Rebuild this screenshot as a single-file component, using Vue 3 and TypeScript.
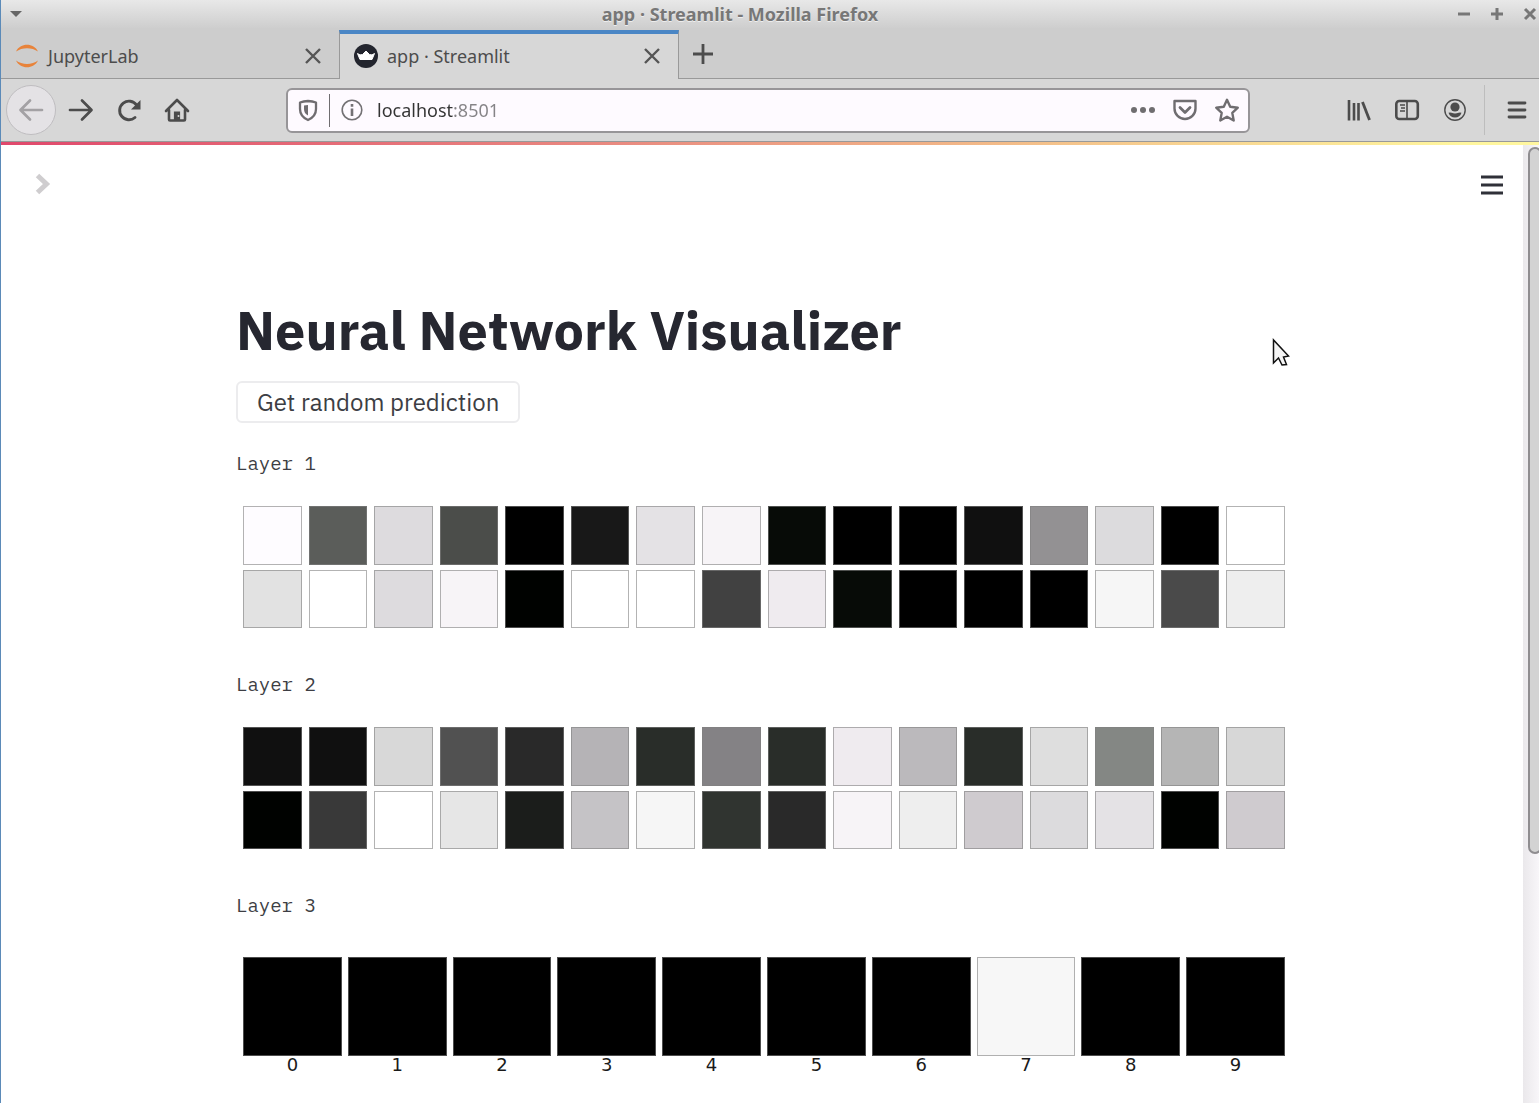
<script setup lang="ts">
import { ref } from 'vue'

interface Layer {
  name: string
  cells: string[]
}

const address = ref('localhost:8501')

const hiddenLayers: Layer[] = [
  {
    name: 'Layer 1',
    cells: [
      '#fefcff', '#5b5d5a', '#dddbde', '#4b4d4a', '#000000', '#181818', '#e4e2e5', '#f7f4f7',
      '#070b07', '#000000', '#000000', '#101010', '#939193', '#dcdbdd', '#000000', '#ffffff',
      '#e2e2e2', '#ffffff', '#dddbde', '#f7f4f7', '#000200', '#ffffff', '#ffffff', '#414141',
      '#efebef', '#070b07', '#000000', '#000000', '#000000', '#f6f6f6', '#4a4a4a', '#eeeeee',
    ],
  },
  {
    name: 'Layer 2',
    cells: [
      '#101010', '#101010', '#d8d8d8', '#515151', '#292929', '#b5b3b6', '#292d29', '#848285',
      '#292d29', '#efebef', '#bbb9bc', '#292d29', '#dedede', '#848784', '#b5b5b5', '#d7d7d7',
      '#000200', '#393939', '#ffffff', '#e6e6e6', '#1b1d1b', '#c5c3c6', '#f6f6f6', '#303430',
      '#292929', '#f7f4f7', '#eeeeee', '#cfcbcf', '#dcdbdd', '#e4e2e5', '#000200', '#cfcbcf',
    ],
  },
]

const digits: string[] = Array.from({ length: 10 }, (_, i) => (i === 7 ? '#f7f7f7' : '#000000'))
</script>

<template>
  <div class="window">
    <header class="titlebar">
      <button class="win-btn" aria-label="Window menu">
        <svg width="12" height="8" viewBox="0 0 12 8"><path d="M0 1h12L6 7z" fill="#666" /></svg>
      </button>
      <span class="win-title">app · Streamlit - Mozilla Firefox</span>
      <div class="win-actions">
        <button class="win-btn" aria-label="Minimize">
          <svg width="14" height="14" viewBox="0 0 14 14"><path d="M1 7h12" stroke="#777" stroke-width="3" /></svg>
        </button>
        <button class="win-btn" aria-label="Maximize">
          <svg width="14" height="14" viewBox="0 0 14 14"><path d="M1 7h12M7 1v12" stroke="#777" stroke-width="3" /></svg>
        </button>
        <button class="win-btn" aria-label="Close window">
          <svg width="14" height="14" viewBox="0 0 14 14"><path d="M2 2l10 10M12 2L2 12" stroke="#777" stroke-width="3" /></svg>
        </button>
      </div>
    </header>

    <nav class="tabs">
      <div class="tab">
        <svg width="24" height="26" viewBox="0 0 24 26" fill="#e8833a">
          <path d="M1 8.500C5 -.5 19 -.5 23 8.500C17 4 7 4 1 8.500z" />
          <path d="M1 17.500C5 26.500 19 26.500 23 17.500C17 22 7 22 1 17.500z" />
        </svg>
        <span class="tab-name">JupyterLab</span>
        <button class="tab-close" aria-label="Close tab">
          <svg width="16" height="16" viewBox="0 0 16 16"><path d="M1 1l14 14M15 1L1 15" stroke="#555" stroke-width="2.400" /></svg>
        </button>
      </div>
      <div class="tab active">
        <svg width="24" height="24" viewBox="0 0 24 24">
          <circle cx="12" cy="12" r="12" fill="#23252e" />
          <path d="M3.500 9.500Q6 11.800 8.500 10.500L12 7l3.500 3.500q2.500 1.300 5-1L18 15.500H6z" fill="#fff" stroke="#fff" stroke-linejoin="round" />
        </svg>
        <span class="tab-name">app · Streamlit</span>
        <button class="tab-close" aria-label="Close tab">
          <svg width="16" height="16" viewBox="0 0 16 16"><path d="M1 1l14 14M15 1L1 15" stroke="#555" stroke-width="2.400" /></svg>
        </button>
      </div>
      <div class="tab-rest">
        <button class="new-tab" aria-label="New tab">
          <svg width="22" height="22" viewBox="0 0 22 22"><path d="M1 11h20M11 1v20" stroke="#4c4c4c" stroke-width="2.800" /></svg>
        </button>
      </div>
    </nav>

    <div class="toolbar">
      <button class="back" aria-label="Back">
        <svg width="26" height="26" viewBox="0 0 26 26" fill="none" stroke="#a3a1a4" stroke-width="2.700" stroke-linecap="round" stroke-linejoin="round"><path d="M24 13H3M12 3.500L2.500 13l9.500 9.500" /></svg>
      </button>
      <button class="tool" aria-label="Forward">
        <svg width="26" height="26" viewBox="0 0 26 26" fill="none" stroke="#4c4c4c" stroke-width="2.700" stroke-linecap="round" stroke-linejoin="round"><path d="M2 13h21M14 3.500l9.500 9.500-9.500 9.500" /></svg>
      </button>
      <button class="tool" aria-label="Reload">
        <svg width="26" height="26" viewBox="0 0 26 26" fill="none" stroke="#4c4c4c">
          <path d="M19 20.500A9.300 9.300 0 1 1 20.500 8" stroke-width="2.900" stroke-linecap="round" />
          <path d="M24.500 3v9.500h-9.500z" fill="#4c4c4c" stroke="none" />
        </svg>
      </button>
      <button class="tool" aria-label="Home">
        <svg width="26" height="26" viewBox="0 0 26 26" fill="none" stroke="#4c4c4c">
          <path d="M2 14L13 3l11 11M5 13v9.500q0 1 1 1h14q1 0 1-1V13" stroke-width="2.600" stroke-linecap="round" stroke-linejoin="round" />
          <path d="M10.500 23.500V15h5v8.500z" fill="#4c4c4c" stroke-width="1.200" />
          <circle cx="14.500" cy="19" r="1" fill="#d7d7d7" stroke="none" />
        </svg>
      </button>

      <div class="url">
        <svg width="22" height="24" viewBox="0 0 22 24" fill="none" stroke="#6f6d70">
          <path d="M11 3Q15.500 3.200 19 4.500V11q0 7.500-8 11Q3 18.500 3 11V4.500Q6.500 3.200 11 3z" stroke-width="2.300" stroke-linejoin="round" />
          <path d="M11 7v10.500Q7 15.500 7 11V7.500q2-.5 4-.5z" fill="#6f6d70" stroke="none" />
        </svg>
        <span class="url-sep"></span>
        <svg width="22" height="22" viewBox="0 0 22 22" fill="none" stroke="#737174">
          <circle cx="11" cy="11" r="9.800" stroke-width="1.600" />
          <path d="M11 9.500V17M11 5v2.700" stroke-width="2.600" />
        </svg>
        <input v-model="address" class="address" type="text" aria-label="Address" spellcheck="false" />
        <button class="url-btn" aria-label="Page actions">
          <svg width="26" height="8" viewBox="0 0 26 8" fill="#6f6d70"><circle cx="4" cy="4" r="3" /><circle cx="13" cy="4" r="3" /><circle cx="22" cy="4" r="3" /></svg>
        </button>
        <button class="url-btn" aria-label="Save to Pocket">
          <svg width="26" height="24" viewBox="0 0 26 24" fill="none" stroke="#6f6d70" stroke-linecap="round" stroke-linejoin="round">
            <path d="M2.500 3h21v7.500a10.500 10.500 0 0 1-21 0z" stroke-width="2.400" />
            <path d="M8 9.500l5 5 5-5" stroke-width="2.800" />
          </svg>
        </button>
        <button class="url-btn" aria-label="Bookmark this page">
          <svg width="26" height="26" viewBox="0 0 26 26" fill="none" stroke="#6f6d70" stroke-width="2.400" stroke-linejoin="round"><path d="M13 2.800l3.200 6.900 7.600 1-5.500 5.200 1.400 7.600L13 19.800l-6.700 3.700 1.400-7.600-5.500-5.200 7.600-1z" /></svg>
        </button>
      </div>

      <button class="tool" aria-label="Library">
        <svg width="26" height="24" viewBox="0 0 26 24" fill="none" stroke="#4c4c4c"><path d="M3 2v20.500M8 5v17.500M12.500 5v17.500" stroke-width="2.600" /><path d="M16.500 4l7 18" stroke-width="2.800" /></svg>
      </button>
      <button class="tool" aria-label="Sidebars">
        <svg width="26" height="24" viewBox="0 0 26 24" fill="none" stroke="#4c4c4c">
          <rect x="2.300" y="3" width="21.500" height="18" rx="3" stroke-width="2.600" />
          <path d="M13 3v18" stroke-width="1.600" />
          <path d="M6 7h5M7 10h4M6 13h5" stroke-width="1.400" />
        </svg>
      </button>
      <button class="tool" aria-label="Account">
        <svg width="24" height="24" viewBox="0 0 24 24" fill="#4c4c4c">
          <circle cx="12" cy="12" r="10.200" fill="none" stroke="#4c4c4c" stroke-width="1.400" />
          <circle cx="12" cy="9" r="4.600" />
          <path d="M5.500 14.800q1.500-.8 3 0 3.500 1.500 7 0 1.500-.8 3 0-1.500 4.700-6.500 4.700t-6.500-4.700z" />
        </svg>
      </button>
      <span class="tool-sep"></span>
      <button class="tool app-menu" aria-label="Open menu">
        <svg width="20" height="20" viewBox="0 0 20 20" stroke="#4c4c4c" stroke-width="2.800" stroke-linecap="round"><path d="M2 3h16M2 10h16M2 17h16" /></svg>
      </button>
    </div>

    <div class="viewport">
      <div class="page">
        <div class="decoration"></div>
        <div class="page-bar">
          <button class="icon-btn" aria-label="Open sidebar">
            <svg width="16" height="24" viewBox="0 0 16 24" fill="none" stroke="#cfcdcf" stroke-width="5"><path d="M2.500 2.500L11.500 11l-9 8.500" /></svg>
          </button>
          <button class="icon-btn" aria-label="Main menu">
            <svg width="24" height="24" viewBox="0 0 24 24" stroke="#2f3038" stroke-width="2.800"><path d="M1 4h22M1 12h22M1 20h22" /></svg>
          </button>
        </div>

        <main class="content">
          <h1>Neural Network Visualizer</h1>
          <button class="predict">Get random prediction</button>

          <section v-for="layer in hiddenLayers" :key="layer.name" class="layer">
            <p class="label">{{ layer.name }}</p>
            <div class="nodes">
              <div v-for="(shade, i) in layer.cells" :key="i" class="node" :style="{ backgroundColor: shade }"></div>
            </div>
          </section>

          <section class="layer output">
            <p class="label">Layer 3</p>
            <div class="nodes">
              <figure v-for="(shade, i) in digits" :key="i">
                <div class="node" :style="{ backgroundColor: shade }"></div>
                <figcaption>{{ i }}</figcaption>
              </figure>
            </div>
          </section>
        </main>

        <svg class="pointer" width="18" height="30" viewBox="0 0 18 30">
          <path d="M1.500 2v23l5-5 3.500 7 4.500-.5-3-7.500 5-1z" fill="#f4f4f4" stroke="#111" stroke-width="1.500" />
        </svg>
      </div>
      <div class="scrollbar"><div class="thumb"></div></div>
    </div>
  </div>
</template>

<style>
body {
  margin: 0;
  background: #fff;
}
</style>

<style scoped>
* {
  box-sizing: border-box;
}

button {
  display: flex;
  align-items: center;
  justify-content: center;
  flex: none;
  margin: 0;
  padding: 0;
  border: 0;
  background: none;
}

svg {
  display: block;
  flex: none;
}

.window {
  display: flex;
  flex-direction: column;
  min-height: 100vh;
  overflow: hidden;
  border-left: 1px solid #5b8ab8;
  font-family: "Noto Sans", "Open Sans", sans-serif;
  font-size: 18px;
  color: #4c4c4c;
}

.titlebar {
  position: relative;
  display: flex;
  align-items: center;
  justify-content: space-between;
  height: 28px;
  padding-left: 9px;
  background: linear-gradient(#e8e8e8, #cecece);
}

.win-title {
  position: absolute;
  left: 0;
  right: 60px;
  text-align: center;
  font-weight: 700;
  line-height: 28px;
  color: #777;
  text-shadow: 0 1px 0 #eee;
}

.win-btn {
  z-index: 1;
}

.win-actions {
  display: flex;
  gap: 19px;
  margin-right: 2px;
}

.tabs {
  display: flex;
  height: 51px;
  padding-top: 2px;
  background: #cdcdcd;
}

.tab {
  display: flex;
  align-items: center;
  flex: 0 0 338px;
  padding: 3px 18px 0 14px;
  border-bottom: 1px solid #999;
}

.tab.active {
  flex-basis: 340px;
  border: 1px solid #999;
  border-top: 4px solid #4a86c5;
  border-bottom: 0;
  padding-top: 0;
  padding-bottom: 2px;
  background: #d7d7d7;
}

.tab-name {
  flex: 1;
  margin-left: 9px;
}

.tab-rest {
  display: flex;
  flex: 1;
  padding-left: 13px;
  border-bottom: 1px solid #999;
}

.toolbar {
  display: flex;
  align-items: center;
  height: 63px;
  padding-left: 5px;
  background: #d7d7d7;
  border-bottom: 1px solid #999;
}

.back {
  width: 50px;
  height: 50px;
  margin-right: 1px;
  border: 1px solid #bfbdc0;
  border-radius: 50%;
  background: #e4e2e5;
}

.tool {
  width: 48px;
  height: 48px;
}

.url {
  display: flex;
  align-items: center;
  flex: 1;
  height: 45px;
  margin: 0 85px;
  padding: 0 0 0 9px;
  border: 2px solid #979598;
  border-radius: 6px;
  background: #fefaff;
}

.url-sep {
  width: 1px;
  height: 33px;
  margin: 0 11px 0 10px;
  background: #6f6d70;
}

.address {
  flex: 1;
  min-width: 0;
  height: 32px;
  margin-left: 14px;
  padding: 0;
  border: 0;
  outline: 0;
  font: inherit;
  color: transparent;
  background: linear-gradient(90deg, #333 77px, #858386 77px);
  background-clip: text;
  -webkit-background-clip: text;
}

.url-btn {
  width: 42px;
  height: 40px;
}

.tool-sep {
  width: 1px;
  height: 50px;
  margin: 0 8px 0 5px;
  background: #bdbdbd;
}

.app-menu {
  margin-right: -2px;
}

.viewport {
  display: flex;
  flex: 1;
}

.page {
  position: relative;
  flex: 1;
  background: #fff;
}

.decoration {
  height: 3px;
  margin-right: -16px;
  background: linear-gradient(90deg, #e0486c, #e98a80 40%, #f3bb88 65%, #fff69e 95%);
}

.page-bar {
  display: flex;
  justify-content: space-between;
  align-items: center;
  height: 80px;
  padding: 0 19px 0 34px;
}

.content {
  max-width: 1052px;
  margin: 0 auto;
  padding: 70px 0 24px;
  font-family: "IBM Plex Sans", Roboto, "Liberation Sans", sans-serif;
}

h1 {
  margin: 0;
  font-family: "IBM Plex Sans", "Noto Sans", sans-serif;
  font-size: 54px;
  font-weight: 700;
  line-height: 70px;
  color: #262730;
}

.predict {
  height: 42px;
  margin-top: 16px;
  padding: 0 19px;
  border: 2px solid #ececee;
  border-radius: 6px;
  font-family: inherit;
  font-size: 24px;
  color: #3d3e44;
}

.layer {
  margin-top: 42px;
}

.predict + .layer {
  margin-top: 26px;
}

.label {
  margin: 0 0 29px;
  font-family: "IBM Plex Mono", "Liberation Mono", monospace;
  font-size: 19px;
  line-height: 28px;
  color: #3d3e44;
}

.nodes {
  display: grid;
  grid-template-columns: repeat(16, 1fr);
  gap: 5px 7px;
  padding: 0 3px 0 7px;
}

.node {
  aspect-ratio: 1;
  border: 1px solid rgba(128, 128, 128, 0.6);
}

.output .label {
  margin-bottom: 38px;
}

.output .nodes {
  grid-template-columns: repeat(10, 1fr);
  gap: 6px;
}

figure {
  margin: 0;
}

figcaption {
  font-family: "DejaVu Sans", sans-serif;
  font-size: 18px;
  line-height: 18px;
  text-align: center;
  color: #1a1a1a;
}

.pointer {
  position: absolute;
  top: 196px;
  right: 233px;
}

.scrollbar {
  flex: none;
  width: 16px;
  margin-top: 3px;
  padding: 2px 0 0 5px;
  background: linear-gradient(90deg, #eae8eb, #f8f6f9);
}

.thumb {
  width: 14px;
  height: 74%;
  border: 2px solid #8f8d90;
  border-radius: 7px;
  background: #d3d3d3;
}
</style>
